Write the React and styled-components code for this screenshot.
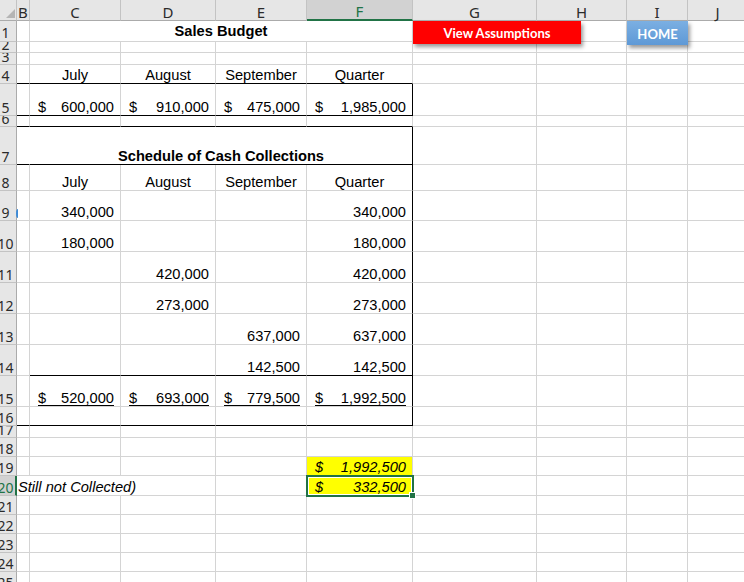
import React from 'react';
import styled, { createGlobalStyle } from 'styled-components';

const GRID = '#d4d4d4';
const GREEN = '#217346';
const HEAD_BG = '#e6e6e6';
const HEAD_LINE = '#c3c3c3';

const Global = createGlobalStyle`
  html, body { margin: 0; padding: 0; background: #fff; overflow: hidden; }
  #root { width: 744px; height: 582px; overflow: hidden; }
`;

const COLS = ['B', 'C', 'D', 'E', 'F', 'G', 'H', 'I', 'J'];
const COL_W = [13, 91, 95, 91, 106, 124, 90, 61, 60];
const ROW_H = [21, 11, 12, 19, 32, 11, 38, 26, 30, 31, 31, 31, 31, 31, 31, 19, 12, 19, 19, 20, 19, 19, 19, 19, 19];

const Sheet = styled.div`
  position: relative;
  display: grid;
  grid-template-columns: 17px ${COL_W.map((w) => `${w}px`).join(' ')};
  grid-template-rows: 21px ${ROW_H.map((h) => `${h}px`).join(' ')};
  width: 744px;
  height: 582px;
  overflow: hidden;
  background: #fff;
`;

const Corner = styled.div`
  position: relative;
  box-sizing: border-box;
  background: ${HEAD_BG};
  border-right: 1px solid ${HEAD_LINE};
  border-bottom: 1px solid #ababab;
  &::after {
    content: '';
    position: absolute;
    right: 1px;
    bottom: 2px;
    width: 9px;
    height: 9px;
    background: #b5b5b5;
    clip-path: polygon(100% 0, 100% 100%, 0 100%);
  }
`;

const ColHead = styled.div`
  box-sizing: border-box;
  display: flex;
  align-items: flex-end;
  justify-content: center;
  background: ${(p) => (p.$active ? '#d2d2d2' : HEAD_BG)};
  border-right: 1px solid ${HEAD_LINE};
  border-bottom: ${(p) => (p.$active ? `2px solid ${GREEN}` : '1px solid #ababab')};
  font-family: 'Noto Sans', 'Open Sans', sans-serif;
  font-size: 15px;
  line-height: 15px;
  color: ${(p) => (p.$active ? GREEN : '#2b2b2b')};
`;

const RowHead = styled.div`
  box-sizing: border-box;
  display: flex;
  align-items: flex-end;
  overflow: hidden;
  background: ${(p) => (p.$active ? '#d2d2d2' : HEAD_BG)};
  border-right: ${(p) => (p.$active ? `2px solid ${GREEN}` : '1px solid #ababab')};
  border-bottom: 1px solid ${HEAD_LINE};
  font-family: 'Noto Sans', 'Open Sans', sans-serif;
  font-size: 14px;
  line-height: 14px;
  color: ${(p) => (p.$active ? GREEN : '#2b2b2b')};
  padding-bottom: ${(p) => (p.$tall ? '1px' : '0')};
`;

const RowLabel = styled.span`
  flex: 0 0 25px;
  width: 25px;
  margin-left: -7px;
  text-align: center;
`;

const justify = { left: 'flex-start', center: 'center', right: 'flex-end' };

const Cell = styled.div`
  grid-column: span ${(p) => p.$span || 1};
  position: relative;
  box-sizing: border-box;
  min-width: 0;
  display: flex;
  align-items: flex-end;
  justify-content: ${(p) => justify[p.$align || 'left']};
  border-right: 1px solid ${(p) => (p.$br ? '#000' : p.$noR ? 'transparent' : GRID)};
  border-bottom: 1px solid ${(p) => (p.$bb ? '#000' : GRID)};
  background: ${(p) => p.$fill || 'transparent'};
  padding: 0 6px ${(p) => (p.$lift ? '2px' : '0')} ${(p) => (p.$align === 'left' ? '1px' : p.$acct ? '8px' : '6px')};
  font-family: 'Liberation Sans', Arial, sans-serif;
  font-size: 11pt;
  line-height: 15px;
  font-weight: ${(p) => (p.$bold ? 700 : 400)};
  font-style: ${(p) => (p.$italic ? 'italic' : 'normal')};
  color: #000;
  white-space: nowrap;
`;

const Acct = styled.div`
  flex: 1;
  display: flex;
  justify-content: space-between;
  line-height: ${(p) => (p.$under ? '13px' : '15px')};
  border-bottom: ${(p) => (p.$under ? '1px solid #000' : 'none')};
`;

const Selection = styled.div`
  position: absolute;
  left: -1px;
  top: -1px;
  right: -2px;
  bottom: -2px;
  border: 2px solid ${GREEN};
  box-shadow: inset 0 0 0 1px #fff;
  pointer-events: none;
  z-index: 2;
`;

const FillHandle = styled.div`
  position: absolute;
  right: -4px;
  bottom: -4px;
  width: 7px;
  height: 7px;
  box-sizing: border-box;
  background: ${GREEN};
  border: 1px solid #fff;
`;

const ShapeButton = styled.div`
  position: absolute;
  top: 21px;
  box-sizing: border-box;
  display: flex;
  align-items: center;
  justify-content: center;
  font-family: Lato, 'Noto Sans', sans-serif;
  font-weight: 700;
  font-size: 13px;
  color: #fff;
  padding-top: 1px;
  box-shadow: 2px 3px 4px rgba(0, 0, 0, 0.4);
  z-index: 3;
`;

const RedButton = styled(ShapeButton)`
  left: 413px;
  width: 168px;
  height: 23px;
  background: #ff0000;
`;

const HomeButton = styled(ShapeButton)`
  left: 627px;
  width: 61px;
  height: 24px;
  background: linear-gradient(#7bafe2, #5e99d6);
`;

const EdgeMark = styled.span`
  position: absolute;
  left: 16px;
  top: 209px;
  width: 4px;
  height: 9px;
  box-sizing: border-box;
  border-left: 2px solid #3d8bd8;
  border-radius: 50%;
  z-index: 3;
`;

/* ---------- cell data ---------- */
const spec = {};
const set = (r, c, v) => {
  const k = `${r}-${c}`;
  spec[k] = { ...(spec[k] || {}), ...v };
};
const range = (a, b) => Array.from({ length: b - a + 1 }, (_, i) => a + i);

set(1, 1, { text: 'Sales Budget', bold: true, align: 'center', span: 4, lift: true });

const months = ['July', 'August', 'September', 'Quarter'];
months.forEach((m, i) => set(4, i + 1, { text: m, align: 'center' }));
range(0, 4).forEach((c) => set(4, c, { bb: true }));

['600,000', '910,000', '475,000', '1,985,000'].forEach((v, i) => set(5, i + 1, { acct: v }));
range(0, 4).forEach((c) => set(5, c, { bb: true }));
set(5, 4, { br: true });

range(0, 4).forEach((c) => set(6, c, { bb: true }));

set(7, 0, { noR: true, bb: true });
set(7, 1, { text: 'Schedule of Cash Collections', bold: true, align: 'center', span: 4, bb: true, br: true });

months.forEach((m, i) => set(8, i + 1, { text: m, align: 'center' }));

const amounts = [
  [9, 1, '340,000'],
  [10, 1, '180,000'],
  [11, 2, '420,000'],
  [12, 2, '273,000'],
  [13, 3, '637,000'],
  [14, 3, '142,500'],
];
amounts.forEach(([r, c, v]) => {
  set(r, c, { text: v, align: 'right' });
  set(r, 4, { text: v, align: 'right' });
});
range(1, 4).forEach((c) => set(14, c, { bb: true }));

['520,000', '693,000', '779,500', '1,992,500'].forEach((v, i) => set(15, i + 1, { acct: v, under: true }));

range(0, 4).forEach((c) => set(16, c, { bb: true }));
range(8, 16).forEach((r) => set(r, 4, { br: true }));

set(19, 4, { acct: '1,992,500', italic: true, fill: '#ffff00' });
set(20, 0, { text: 'Still not Collected)', italic: true, align: 'left', span: 3 });
set(20, 4, { acct: '332,500', italic: true, fill: '#ffff00', selected: true });

function renderRow(r) {
  const cells = [];
  let c = 0;
  while (c < COLS.length) {
    const s = spec[`${r}-${c}`] || {};
    cells.push(
      <Cell
        key={`${r}-${c}`}
        $span={s.span}
        $align={s.align}
        $bold={s.bold}
        $italic={s.italic}
        $bb={s.bb}
        $br={s.br}
        $noR={s.noR}
        $fill={s.fill}
        $acct={!!s.acct}
        $lift={s.lift}
      >
        {s.acct ? (
          <Acct $under={s.under}>
            <span>$</span>
            <span>{s.acct}</span>
          </Acct>
        ) : (
          s.text
        )}
        {s.selected && (
          <Selection>
            <FillHandle />
          </Selection>
        )}
      </Cell>
    );
    c += s.span || 1;
  }
  return (
    <React.Fragment key={r}>
      <RowHead $active={r === 20} $tall={r === 1}>
        <RowLabel>{r}</RowLabel>
      </RowHead>
      {cells}
    </React.Fragment>
  );
}

export default function App() {
  return (
    <>
      <Global />
      <Sheet>
        <Corner />
        {COLS.map((l) => (
          <ColHead key={l} $active={l === 'F'}>
            {l}
          </ColHead>
        ))}
        {ROW_H.map((_, i) => renderRow(i + 1))}
        <RedButton>View Assumptions</RedButton>
        <HomeButton>HOME</HomeButton>
        <EdgeMark />
      </Sheet>
    </>
  );
}
